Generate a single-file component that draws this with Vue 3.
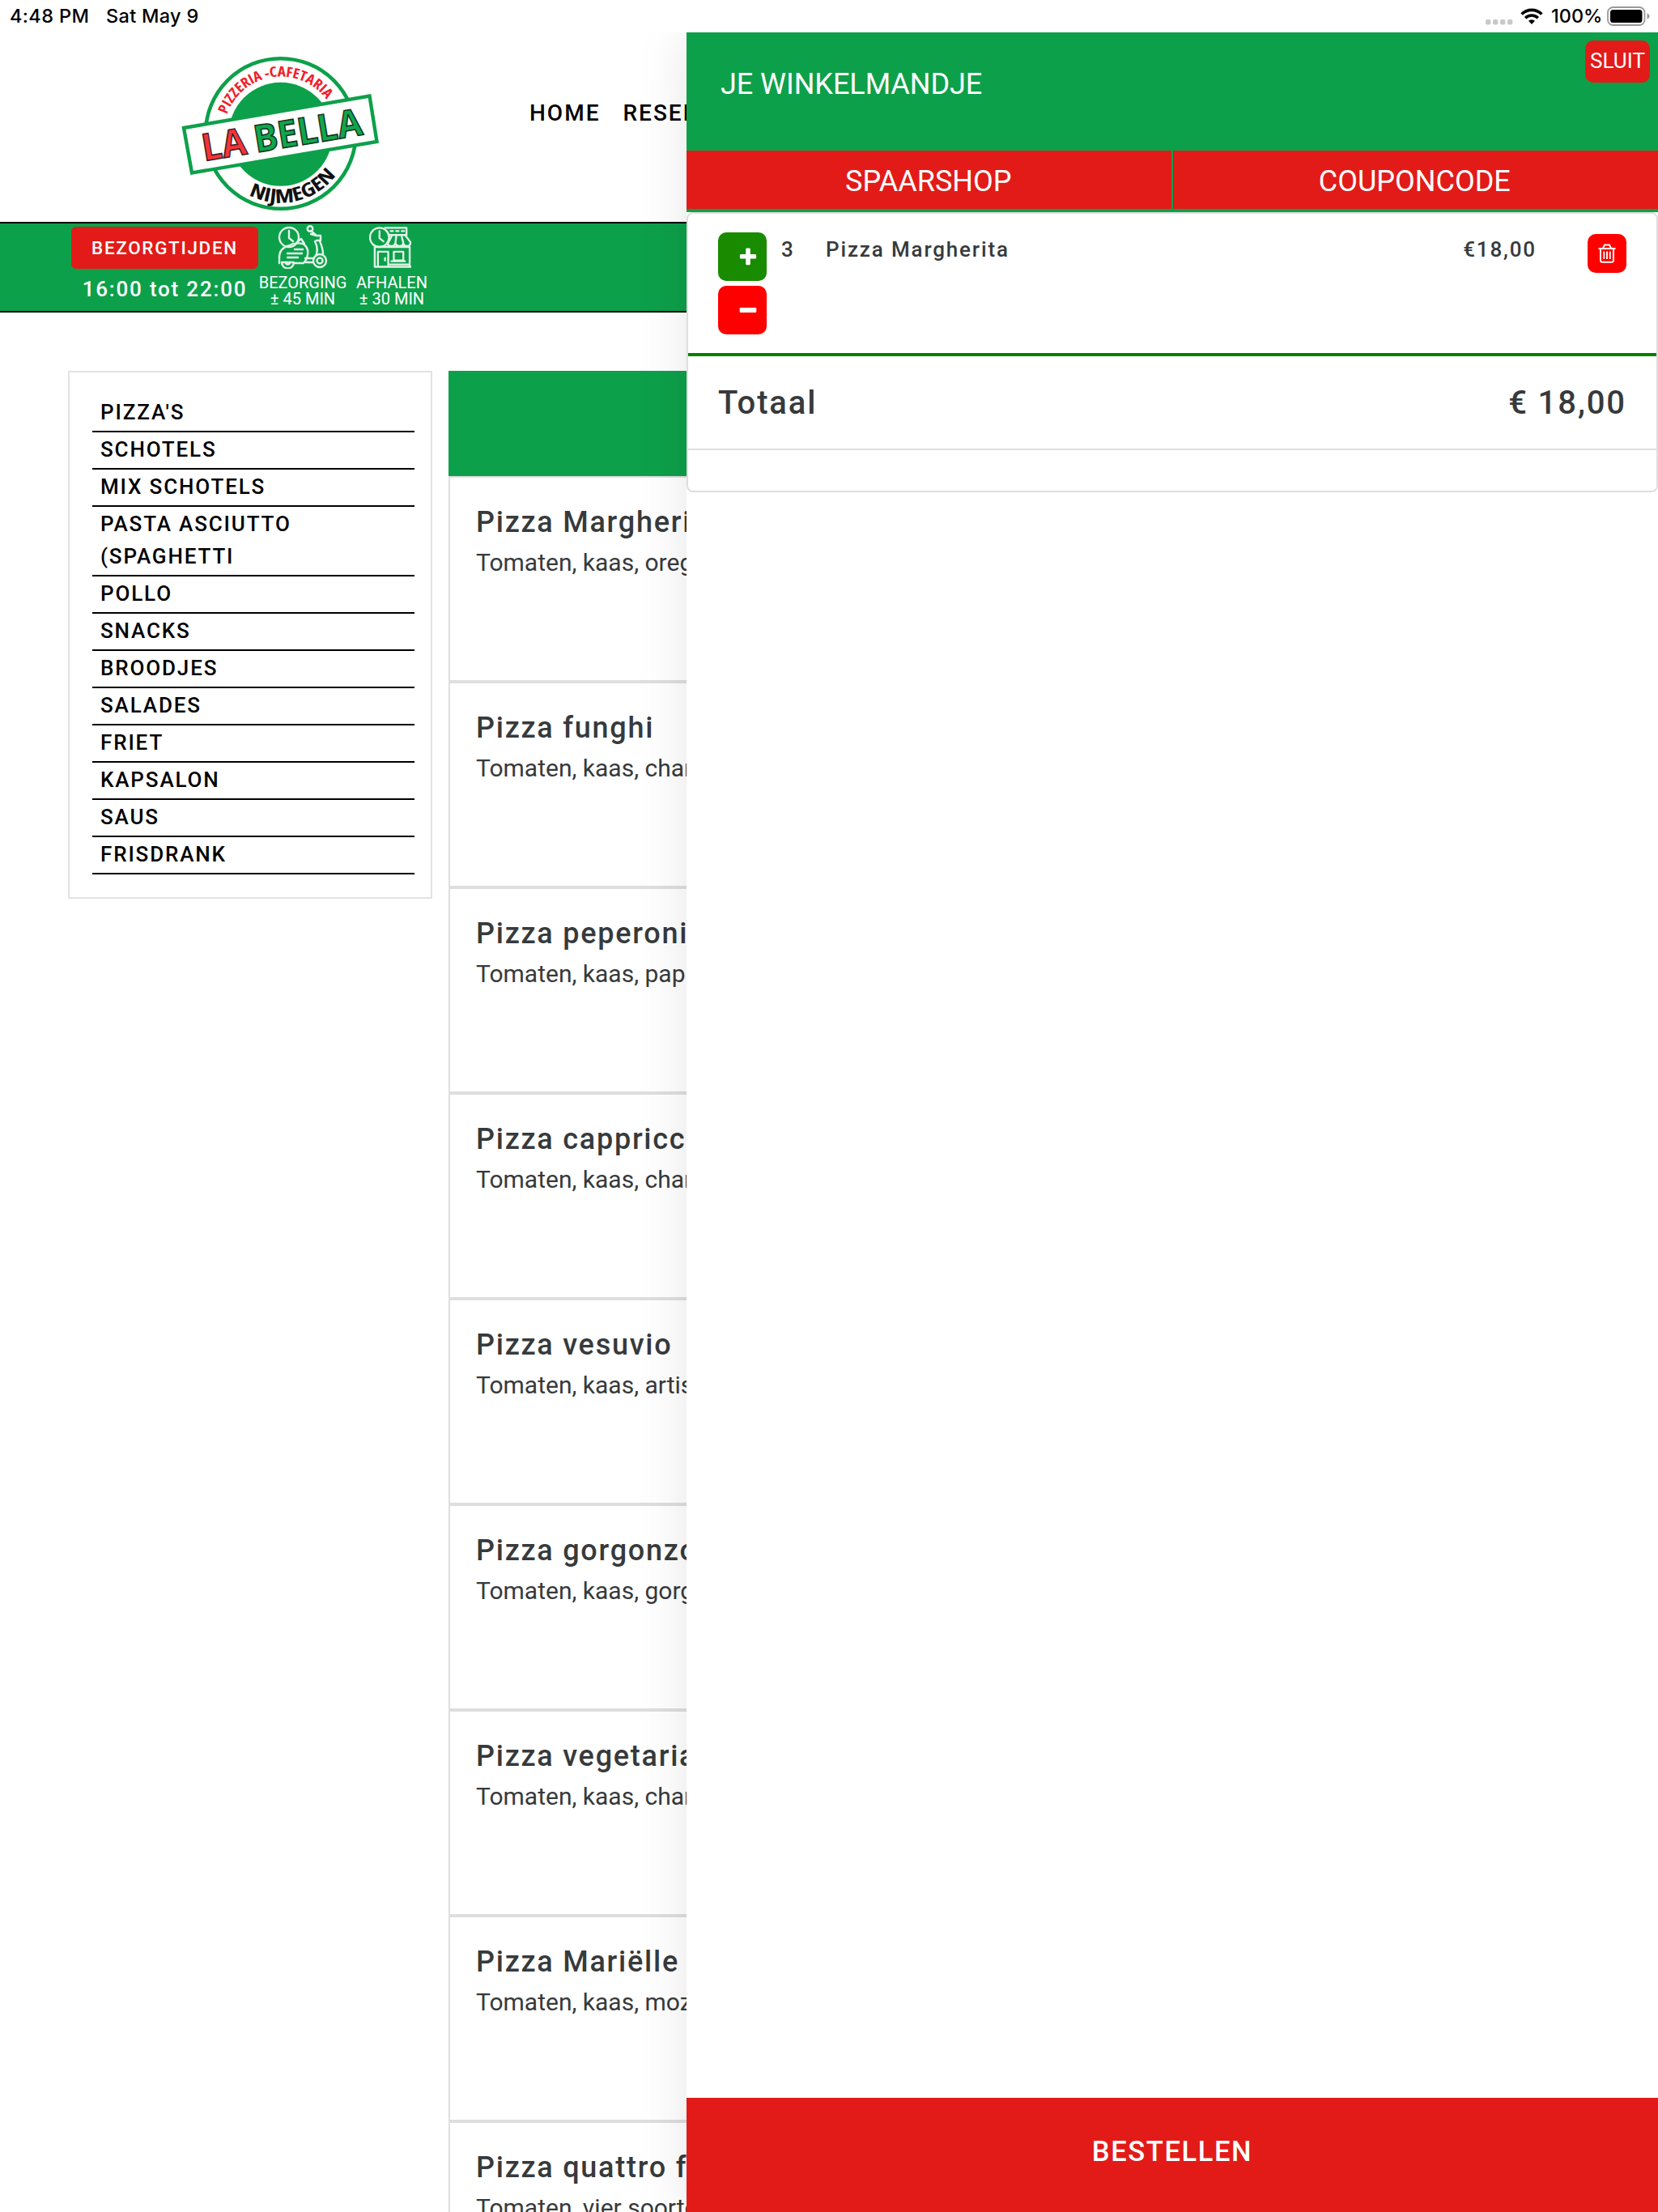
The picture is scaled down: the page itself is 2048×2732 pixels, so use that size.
<script setup>
const categories = ["PIZZA'S", 'SCHOTELS', 'MIX SCHOTELS', 'PASTA ASCIUTTO (SPAGHETTI', 'POLLO', 'SNACKS', 'BROODJES', 'SALADES', 'FRIET', 'KAPSALON', 'SAUS', 'FRISDRANK']

const dishes = [
  { name: 'Pizza Margherita', desc: 'Tomaten, kaas, oregano' },
  { name: 'Pizza funghi', desc: 'Tomaten, kaas, champignons' },
  { name: 'Pizza peperoni', desc: 'Tomaten, kaas, paprika' },
  { name: 'Pizza cappricciosa', desc: 'Tomaten, kaas, champignons' },
  { name: 'Pizza vesuvio', desc: 'Tomaten, kaas, artisjokken' },
  { name: 'Pizza gorgonzola', desc: 'Tomaten, kaas, gorgonzola' },
  { name: 'Pizza vegetariana', desc: 'Tomaten, kaas, champignons' },
  { name: 'Pizza Mariëlle', desc: 'Tomaten, kaas, mozzarella' },
  { name: 'Pizza quattro formaggi', desc: 'Tomaten, vier soorten kaas' },
]
</script>

<template>
  <div class="screen">
    <header class="status">
      <span class="time">4:48 PM</span>
      <span class="date">Sat May 9</span>
      <span class="spacer"></span>
      <svg class="cell" width="34" height="7" viewBox="0 0 34 7" fill="#c9c9c9">
        <rect v-for="i in 4" :key="i" :x="(i - 1) * 9" y="0" width="6.4" height="6.4" rx="2" />
      </svg>
      <svg class="wifi" width="28" height="20" viewBox="0 0 28 20">
        <g fill="none" stroke="#000" stroke-width="3.6">
          <path d="M1.6 7.6a17.4 17.4 0 0 1 24.8 0" />
          <path d="M6.2 12.2a11 11 0 0 1 15.6 0" />
        </g>
        <path d="M10 15.8a5.8 5.8 0 0 1 8 0L14 20z" />
      </svg>
      <span class="pct">100%</span>
      <svg class="battery" width="53" height="24" viewBox="0 0 53 24">
        <rect x="1" y="1" width="45.5" height="22" rx="6.5" fill="none" stroke="#999" stroke-width="1.8" />
        <rect x="4" y="4" width="39.5" height="16" rx="3.6" />
        <path d="M49.5 8.2c4 1.6 4 6 0 7.6z" fill="#999" />
      </svg>
    </header>

    <main class="page">
      <div class="top">
        <svg class="logo" width="260" height="210" viewBox="0 0 260 210">
          <defs>
            <path id="arc-top" d="M56.200 105A70.500 70.500 0 0 1 197.200 105" />
            <path id="arc-bottom" d="M41.200 105A85.500 85.500 0 0 0 212.200 105" />
          </defs>
          <circle cx="126.7" cy="105" r="92.8" fill="#fff" stroke="#0da04a" stroke-width="4.6" />
          <circle cx="126.7" cy="105.8" r="64" fill="#0da04a" />
          <text class="logo-arc" fill="#f0202a" font-size="17.5" textLength="152" lengthAdjust="spacingAndGlyphs"><textPath href="#arc-top" startOffset="24">PIZZERIA -CAFETARIA</textPath></text>
          <text class="logo-arc" fill="#111" font-size="23.5" textLength="120" lengthAdjust="spacingAndGlyphs"><textPath href="#arc-bottom" startOffset="93">NIJMEGEN</textPath></text>
          <path d="M7 98L236.500 58.500 245.500 115 17 153.500Z" fill="#fff" stroke="#0da04a" stroke-width="4.4" />
          <g transform="translate(32 139) rotate(-9.4)" class="logo-name" font-size="46.500">
            <text fill="#f5333a" stroke="#3b1f22" textLength="55" lengthAdjust="spacingAndGlyphs">LA</text>
            <text x="65" fill="#0fa64c" stroke="#12301c" textLength="135" lengthAdjust="spacingAndGlyphs">BELLA</text>
          </g>
        </svg>
        <nav class="nav"><span>HOME</span><span>RESERVEREN</span></nav>
      </div>

      <div class="info">
        <div class="times">
          <span class="times-btn">BEZORGTIJDEN</span>
          <span class="hours">16:00 tot 22:00</span>
        </div>
        <div class="mode bezorging">
          <svg width="62" height="54" viewBox="0 0 62 54" fill="none" stroke="#e2f5e9" stroke-width="2.4" stroke-linecap="round" stroke-linejoin="round">
            <circle cx="14" cy="15" r="12" />
            <path d="M14 7v9l5 4M24 21l5-4 4 6M41 7l7 6h5v6h-5M48 13l-7-2M46 20q5 10 1 18M52 20q4 9 4 16" />
            <circle cx="40" cy="4.500" r="3.300" />
            <path d="M2 47V40q0-12 13-15 6-4 16-2 10 6 4 20l-3 4H20M34 41h9M35 46h8M12 35h18M21 30h10M12 40h13" />
            <path d="M5 46a7 7 0 0 0 15 0z" /><path d="M10 46a2.500 2.500 0 0 0 5 0" />
            <circle cx="52" cy="44" r="8" /><circle cx="52" cy="44" r="3.500" />
          </svg>
          <span>BEZORGING</span><span>± 45 MIN</span>
        </div>
        <div class="mode afhalen">
          <svg width="53" height="54" viewBox="0 0 54 54" fill="none" stroke="#e2f5e9" stroke-width="2.4" stroke-linecap="round" stroke-linejoin="round">
            <circle cx="13" cy="15" r="12" />
            <path d="M13 7v9l5 4M20 3h27v9H25M27 7h3M34 7h3M41 7h3M28 14l-4 8M34 14l-1 8M41 14l2 8M46 13l6 8q0 5-4 5-5 0-5-4 0 4-5 4-4 0-5-4-1 4-5 4-4 0-5-3M7 27h44M7 27v25M51 27v25M7 52h45M11 50V33h13v17M20 41v3M31 33h12v11H31zM28 45h17M26 49h24" />
          </svg>
          <span>AFHALEN</span><span>± 30 MIN</span>
        </div>
      </div>

      <div class="content">
        <ul class="cats">
          <li v-for="c in categories" :key="c">{{ c }}</li>
        </ul>
        <section class="menu">
          <div class="menu-head"></div>
          <article v-for="d in dishes" :key="d.name" class="dish">
            <h2>{{ d.name }}</h2>
            <p>{{ d.desc }}</p>
          </article>
        </section>
      </div>
    </main>

    <div class="clip">
      <aside class="cart">
        <div class="cart-head">
          <h1>JE WINKELMANDJE</h1>
          <button class="close">SLUIT</button>
        </div>
        <div class="tabs"><span>SPAARSHOP</span><span>COUPONCODE</span></div>
        <div class="card">
          <div class="line">
            <div class="qty">
              <button class="add"><svg width="22" height="22" viewBox="0 0 22 22"><path fill="#fff" d="M9.500.5h3q1.300 0 1.300 1.300V8h6q1.300 0 1.300 1.300v3q0 1.300-1.300 1.300h-6v6.300q0 1.300-1.300 1.300h-3q-1.300 0-1.300-1.300v-6.300h-6q-1.300 0-1.300-1.300v-3Q.9 8 2.200 8h6V1.800Q8.200.5 9.500.5z" /></svg></button>
              <button class="sub"><svg width="22" height="22" viewBox="0 0 22 22"><rect x=".7" y="8" width="20.600" height="6" rx="1.300" fill="#fff" /></svg></button>
            </div>
            <span class="count">3</span>
            <span class="name">Pizza Margherita</span>
            <span class="price">€18,00</span>
            <button class="trash">
              <svg width="22" height="24" viewBox="0 0 22 24" fill="none" stroke="#fff" stroke-width="1.900">
                <path d="M.5 6h21M6 5.500l2-4h6l2 4M3 6v14.500q0 2.200 2.200 2.200h11.600q2.200 0 2.200-2.200V6M7.300 9.500v9.500M11 9.500v9.500M14.700 9.500v9.500" />
              </svg>
            </button>
          </div>
          <div class="total"><span>Totaal</span><span>€ 18,00</span></div>
        </div>
        <button class="order">BESTELLEN</button>
      </aside>
    </div>
  </div>
</template>

<style>
body { margin: 0; background: #fff; }
</style>

<style scoped>
.screen { position: relative; width: 2048px; height: 2732px; overflow: hidden; background: #fff; font-family: Roboto, sans-serif; color: #373a3c; }
.screen * { box-sizing: border-box; }
button { border: 0; padding: 0; font-family: inherit; color: #fff; }

.status { height: 40px; display: flex; align-items: center; padding: 0 10px 0 12px; font: 500 23.5px/40px Inter, sans-serif; color: #000; }
.time { width: 119px; white-space: nowrap; letter-spacing: .4px; }
.date { letter-spacing: .3px; }
.spacer { flex: 1; }
.cell { margin-top: 14px; }
.wifi { margin-left: 9px; }
.pct { margin-left: 10px; width: 69px; white-space: nowrap; }
.battery { flex: none; }

.top { height: 234px; display: flex; }
.logo { margin: 20px 0 0 220px; }
.logo-arc { font-family: "Open Sans", sans-serif; font-weight: 700; font-stretch: 75%; }
.logo-name { font-family: "Open Sans", sans-serif; font-weight: 700; stroke-width: 1.5px; }
.nav { display: flex; gap: 28px; margin: 80px 0 0 174px; font-size: 28px; line-height: 40px; font-weight: 500; letter-spacing: 2px; color: #000; }

.info { height: 112px; display: flex; background: #0da04a; border: solid #000; border-width: 2px 0; color: #fff; padding-left: 88px; }
.times { width: 231px; padding-top: 4px; display: flex; flex-direction: column; align-items: center; font-weight: 500; }
.times-btn { width: 231px; height: 52px; border-radius: 6px; background: #e21b18; font-size: 22.4px; line-height: 52px; text-align: center; letter-spacing: 1.7px; }
.hours { font-size: 26px; line-height: 50px; letter-spacing: 1.8px; white-space: nowrap; }
.mode { display: flex; flex-direction: column; align-items: center; font-size: 20px; line-height: 20px; white-space: nowrap; padding-top: 2px; }
.mode svg { margin-bottom: 7px; }
.bezorging { width: 110px; }
.afhalen { width: 110px; }
.afhalen svg { margin-right: 3px; }

.content { display: flex; align-items: flex-start; padding: 72px 0 0 84px; gap: 20px; }
.cats { width: 450px; height: 652px; margin: 0; padding: 28px 20px 0 28px; border: 2px solid #e2e2e2; list-style: none; }
.cats li { padding: 1px 80px 3px 10px; border-bottom: 2px solid #000; font-size: 26px; line-height: 40px; font-weight: 500; letter-spacing: 1.85px; color: #000; }
.menu { width: 1410px; }
.menu-head { height: 130px; background: #0da04a; }
.dish { height: 254px; padding: 30px 32px; border: 2px solid #dedede; }
.dish h2 { margin: 0; font-size: 36px; line-height: 50px; font-weight: 500; letter-spacing: 1.75px; }
.dish p { margin: 0; font-size: 30px; line-height: 50px; }

.clip { position: absolute; inset: 40px 0 0 0; overflow: hidden; pointer-events: none; }
.cart { margin-left: 848px; width: 1200px; height: 2692px; display: flex; flex-direction: column; background: #fff; box-shadow: 0 0 60px rgba(0, 0, 0, .1); }
.cart-head { height: 146px; flex: none; display: flex; justify-content: space-between; align-items: flex-start; padding: 10px 10px 0 42px; background: #0da04a; color: #fff; }
.cart-head h1 { margin: 29px 0 0; font-size: 36px; line-height: 50px; font-weight: 400; letter-spacing: -.05px; }
.close { width: 80px; height: 52px; padding: 0 0 2px 0; border-radius: 10px; background: #e21b18; font-size: 26px; }
.tabs { height: 76px; flex: none; display: flex; background: #e21b18; border-bottom: 4px solid #0da04a; color: #fff; font-size: 36px; line-height: 76px; text-align: center; }
.tabs span { flex: 1; height: 72px; padding-right: 2px; }
.tabs span:first-child { border-right: 2px solid #0da04a; padding-right: 1px; }
.card { height: 346px; flex: none; border: 2px solid #dedede; border-radius: 8px; font-weight: 500; }
.line { height: 176px; display: flex; align-items: flex-start; padding: 23px 37px 0 37px; border-bottom: 4px solid #008000; font-size: 26px; line-height: 42px; letter-spacing: 1.85px; }
.qty { display: flex; flex-direction: column; gap: 6px; }
.qty button { width: 60px; height: 60px; border-radius: 10px; padding: 0 0 0 26px; display: flex; align-items: center; }
.add { background: #198b00; }
.sub { background: #f00; }
.count { margin-left: 18px; width: 55px; }
.price { margin-left: auto; margin-right: 63px; }
.trash { width: 48px; height: 48px; margin-top: 2px; border-radius: 10px; background: #f00; display: flex; align-items: center; justify-content: center; }
.total { height: 116px; display: flex; justify-content: space-between; padding: 0 37px; border-bottom: 2px solid #dedede; font-size: 40px; line-height: 116px; letter-spacing: 1.9px; }
.order { height: 141px; margin-top: auto; flex: none; padding-bottom: 9px; background: #e21b18; font-size: 34.5px; font-weight: 500; letter-spacing: 1.6px; }
</style>
